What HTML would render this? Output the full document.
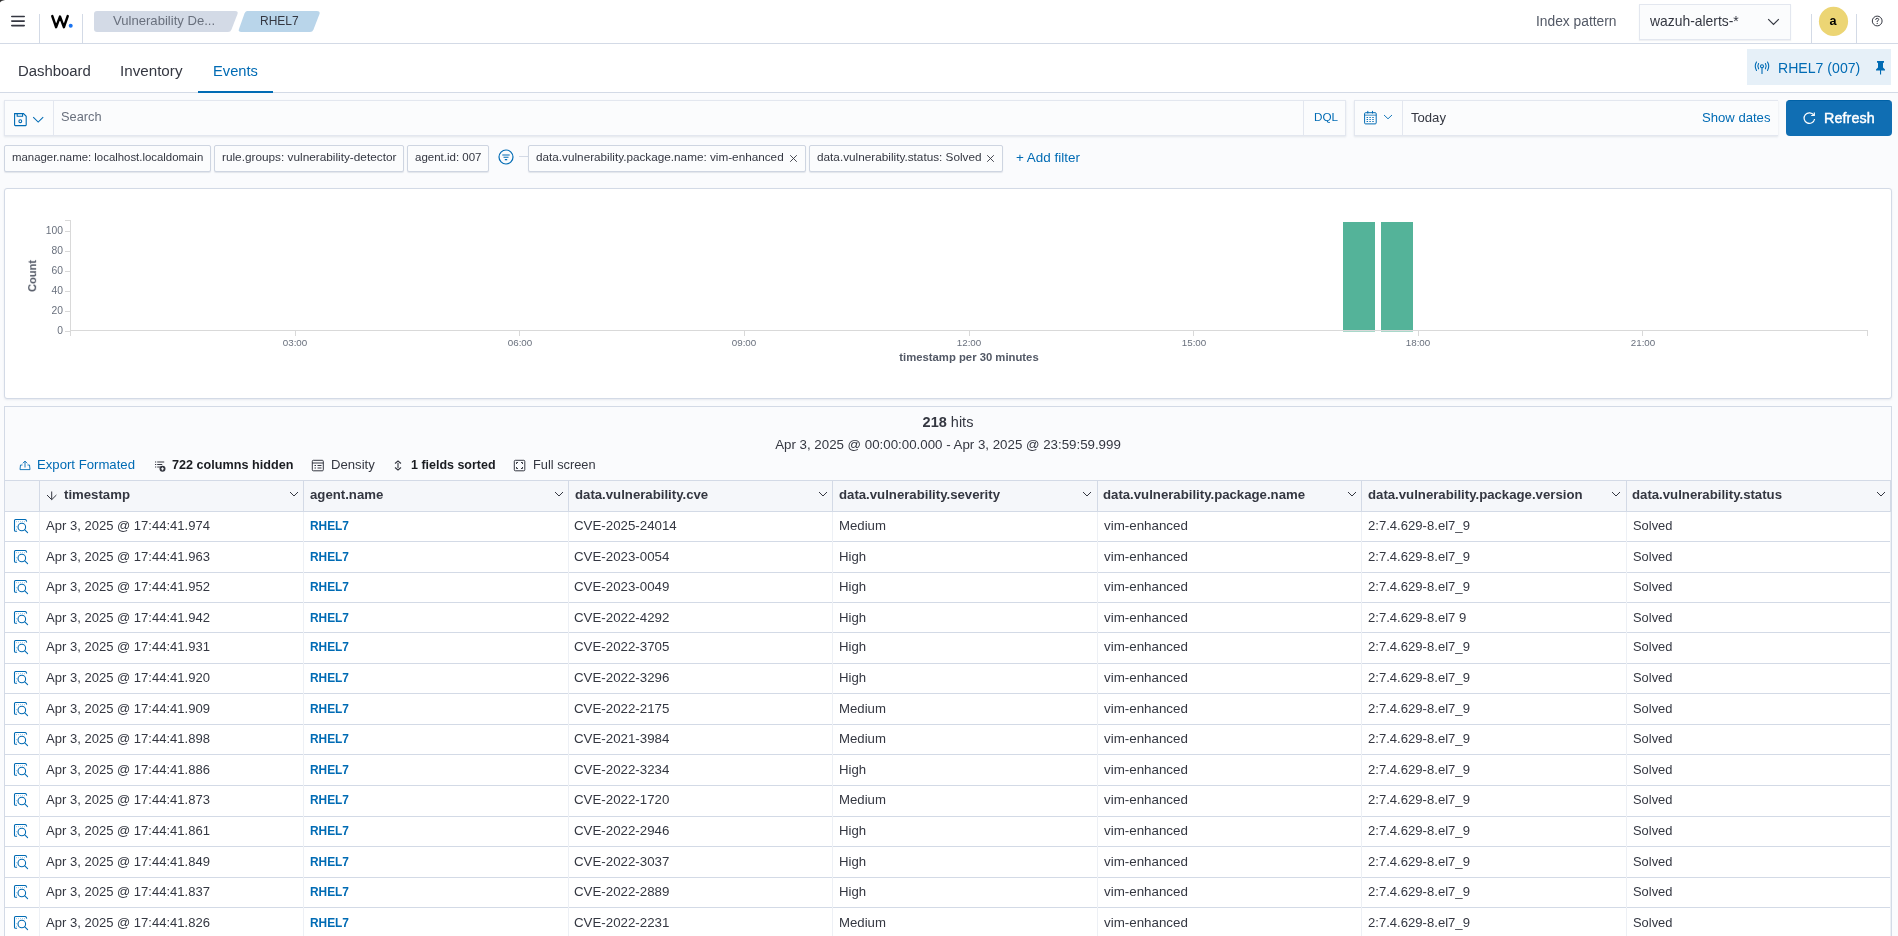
<!DOCTYPE html><html><head><meta charset="utf-8"><style>
html,body{margin:0;padding:0;width:1898px;height:936px;overflow:hidden;background:#FAFBFD;font-family:"Liberation Sans",sans-serif;}
.t{position:absolute;white-space:nowrap;line-height:1;will-change:transform;}
.b{position:absolute;box-sizing:border-box;}
</style></head><body>
<div class="b" style="left:0.00px;top:0.00px;width:1898.00px;height:44.00px;background:#fff;border-bottom:1px solid #D3DAE6"></div>
<div class="b" style="left:0.00px;top:0.00px;width:1.00px;height:1.00px;background:#2b2b2b"></div>
<div class="b" style="left:1.00px;top:0.00px;width:1.00px;height:1.00px;background:#3a3a3a"></div>
<div class="b" style="left:2.00px;top:0.00px;width:1.00px;height:1.00px;background:#6a6a6a"></div>
<div class="b" style="left:3.00px;top:0.00px;width:1.00px;height:1.00px;background:#a8a8a8"></div>
<div class="b" style="left:4.00px;top:0.00px;width:1.00px;height:1.00px;background:#e0e0e0"></div>
<div class="b" style="left:0.00px;top:1.00px;width:1.00px;height:1.00px;background:#555"></div>
<div class="b" style="left:1.00px;top:1.00px;width:1.00px;height:1.00px;background:#d8d8d8"></div>
<div class="b" style="left:0.00px;top:2.00px;width:1.00px;height:1.00px;background:#e8e8e8"></div>
<svg class="b" style="left:10.00px;top:14.00px" width="16" height="14" viewBox="0 0 16 14"><rect x="1" y="1.7" width="14" height="1.6" rx="0.8" fill="#343741"/><rect x="1" y="6.3" width="14" height="1.6" rx="0.8" fill="#343741"/><rect x="1" y="10.8" width="14" height="1.6" rx="0.8" fill="#343741"/></svg>
<div class="b" style="left:39.00px;top:14.00px;width:1.00px;height:29.00px;background:#D3DAE6"></div>
<svg class="b" style="left:50.00px;top:14.00px" width="26" height="15" viewBox="0 0 26 15"><path d="M2.3 2.1 L6.1 13.1 L10 2.6 L13.9 13.1 L17.7 2.1" fill="none" stroke="#000" stroke-width="2.5" stroke-linejoin="round" stroke-linecap="round"/><circle cx="20.7" cy="11.7" r="2" fill="#1A73F0"/></svg>
<div class="b" style="left:82.00px;top:14.00px;width:1.00px;height:29.00px;background:#D3DAE6"></div>
<svg class="b" style="left:94.00px;top:11.00px" width="150" height="21" viewBox="0 0 150 21"><path d="M3 0 H141 Q144.5 0 143.5 3 L137.5 18.5 Q136.5 21 134 21 H3 Q0 21 0 18 V3 Q0 0 3 0 Z" fill="#D3DAE6"/></svg>
<div class="t" style="left:112.80px;top:14.00px;font-size:13.1px;font-weight:400;color:#69707D;">Vulnerability De...</div>
<svg class="b" style="left:238.00px;top:11.00px" width="84" height="21" viewBox="0 0 84 21"><path d="M9 0 H79 Q82.5 0 81.5 3 L75.5 18.5 Q74.5 21 72 21 H3 Q0 21 1 18 L6.5 2.5 Q7.5 0 9 0 Z" fill="#B9D5EA"/></svg>
<div class="t" style="left:260.00px;top:15.00px;font-size:12.0px;font-weight:400;color:#343741;transform:scaleY(1.08);transform-origin:0 100%">RHEL7</div>
<div class="t" style="left:1535.50px;top:15.00px;font-size:13.8px;font-weight:400;color:#535966;">Index pattern</div>
<div class="b" style="left:1638.50px;top:4.00px;width:152.00px;height:35.70px;background:#FBFCFD;border:1px solid #E3E7EF;box-shadow:0 1px 1px rgba(152,162,179,.15)"></div>
<div class="t" style="left:1649.50px;top:15.00px;font-size:13.9px;font-weight:400;color:#343741;">wazuh-alerts-*</div>
<svg class="b" style="left:1767.00px;top:17.50px" width="13" height="8" viewBox="0 0 13 8"><path d="M1.2 1.2 L6.5 6.5 L11.8 1.2" fill="none" stroke="#343741" stroke-width="1.2"/></svg>
<div class="b" style="left:1811.00px;top:14.00px;width:1.00px;height:29.00px;background:#D3DAE6"></div>
<svg class="b" style="left:1818.00px;top:6.00px" width="31" height="31" viewBox="0 0 31 31"><circle cx="15.5" cy="15.4" r="14.6" fill="#ECD574"/></svg>
<div class="t" style="left:1333.30px;width:1000px;text-align:center;top:15.00px;font-size:12.6px;font-weight:700;color:#000;">a</div>
<div class="b" style="left:1856.00px;top:14.00px;width:1.00px;height:29.00px;background:#D3DAE6"></div>
<svg class="b" style="left:1870.00px;top:14.00px" width="14" height="14" viewBox="0 0 14 14"><circle cx="7.2" cy="7" r="4.9" fill="none" stroke="#343741" stroke-width="1"/><path d="M5.7 5.9 Q5.7 4.3 7.2 4.3 Q8.7 4.3 8.7 5.6 Q8.7 6.5 7.2 7.1 V8" fill="none" stroke="#343741" stroke-width="1"/><circle cx="7.2" cy="9.4" r="0.6" fill="#343741"/></svg>
<div class="b" style="left:0.00px;top:44.00px;width:1898.00px;height:49.00px;background:#fff;border-bottom:1px solid #D3DAE6"></div>
<div class="t" style="left:17.60px;top:64.00px;font-size:14.9px;font-weight:400;color:#343741;">Dashboard</div>
<div class="t" style="left:120.40px;top:63.00px;font-size:15.2px;font-weight:400;color:#343741;">Inventory</div>
<div class="t" style="left:213.10px;top:64.00px;font-size:14.7px;font-weight:400;color:#006BB4;">Events</div>
<div class="b" style="left:198.00px;top:91.00px;width:75.00px;height:2.00px;background:#006BB4"></div>
<div class="b" style="left:1747.00px;top:49.00px;width:144.00px;height:36.00px;background:#E6F0F8"></div>
<svg class="b" style="left:1753.00px;top:60.00px" width="18" height="15" viewBox="0 0 18 15"><g fill="none" stroke="#006BB4" stroke-width="1.1" stroke-linecap="round"><path d="M3.5 2 Q1 6 3.5 10.5"/><path d="M5.6 3.5 Q4 6 5.6 8.8"/><path d="M14.5 2 Q17 6 14.5 10.5"/><path d="M12.4 3.5 Q14 6 12.4 8.8"/><circle cx="9" cy="6.2" r="1.5"/><path d="M9 7.8 V13.5"/></g></svg>
<div class="t" style="left:1777.50px;top:61.00px;font-size:14.1px;font-weight:400;color:#006BB4;">RHEL7 (007)</div>
<svg class="b" style="left:1874.00px;top:60.00px" width="13" height="16" viewBox="0 0 13 16"><path d="M3 1 H10 V2.5 L9 3 V7.5 L11 9.5 V10.5 H2 V9.5 L4 7.5 V3 L3 2.5 Z" fill="#006BB4"/><rect x="6" y="10" width="1.1" height="4.5" fill="#006BB4"/></svg>
<div class="b" style="left:4.00px;top:100.00px;width:1342.00px;height:36.00px;background:#FBFCFD;border:1px solid #E3E7EF;box-shadow:0 1px 2px rgba(152,162,179,.25)"></div>
<div class="b" style="left:53.00px;top:101.00px;width:1.00px;height:33.50px;background:#E3E7EF"></div>
<svg class="b" style="left:13.00px;top:112.00px" width="15" height="15" viewBox="0 0 15 15"><g fill="none" stroke="#006BB4" stroke-width="1.1"><path d="M1.6 1.6 H10.5 L13.2 4.3 V13 Q13.2 13.6 12.6 13.6 H2.2 Q1.6 13.6 1.6 13 Z"/><path d="M4.2 1.6 V4.3 H9.6 V1.6"/><circle cx="7.3" cy="9.2" r="1.4"/></g></svg>
<svg class="b" style="left:32.00px;top:115.60px" width="13" height="8" viewBox="0 0 13 8"><path d="M1.2 1.2 L6.2 6.1 L11.2 1.2" fill="none" stroke="#006BB4" stroke-width="1.05"/></svg>
<div class="t" style="left:60.50px;top:111.00px;font-size:12.8px;font-weight:400;color:#69707D;">Search</div>
<div class="b" style="left:1303.00px;top:101.00px;width:1.00px;height:33.50px;background:#E3E7EF"></div>
<div class="t" style="left:1313.70px;top:111.00px;font-size:11.7px;font-weight:400;color:#006BB4;">DQL</div>
<div class="b" style="left:1354.00px;top:100.00px;width:424.00px;height:36.00px;background:#FBFCFD;border:1px solid #E3E7EF;border-right:none;box-shadow:0 1px 2px rgba(152,162,179,.25)"></div>
<div class="b" style="left:1402.00px;top:101.00px;width:1.00px;height:33.50px;background:#E3E7EF"></div>
<svg class="b" style="left:1363.00px;top:110.00px" width="15" height="16" viewBox="0 0 15 16"><g fill="none" stroke="#006BB4" stroke-width="1"><rect x="1.6" y="2.7" width="11.6" height="11.2" rx="1"/><path d="M1.6 5.2 H13.2" stroke-width="1.3" opacity="0.6"/><path d="M4.8 0.9 V3.5 M9.5 0.9 V3.5"/></g><g fill="#006BB4"><rect x="3.5" y="6.9" width="1.6" height="1" rx="0.5"/><rect x="6.3" y="6.9" width="1.6" height="1" rx="0.5"/><rect x="9.2" y="6.9" width="1.6" height="1" rx="0.5"/><rect x="3.5" y="8.9" width="1.6" height="1" rx="0.5"/><rect x="6.3" y="8.9" width="1.6" height="1" rx="0.5"/><rect x="9.2" y="8.9" width="1.6" height="1" rx="0.5"/><rect x="3.5" y="11.0" width="1.6" height="1" rx="0.5"/><rect x="6.3" y="11.0" width="1.6" height="1" rx="0.5"/><rect x="9.2" y="11.0" width="1.6" height="1" rx="0.5"/></g></svg>
<svg class="b" style="left:1383.00px;top:114.00px" width="10" height="7" viewBox="0 0 10 7"><path d="M1 1 L5 4.8 L9 1" fill="none" stroke="#006BB4" stroke-width="0.9"/></svg>
<div class="t" style="left:1411.10px;top:111.00px;font-size:13.1px;font-weight:400;color:#343741;">Today</div>
<div class="t" style="left:1701.60px;top:111.00px;font-size:13.1px;font-weight:400;color:#006BB4;">Show dates</div>
<div class="b" style="left:1786.00px;top:100.00px;width:106.00px;height:36.00px;background:#106EB3;border-radius:4px;border-top:1px solid #0061A6"></div>
<svg class="b" style="left:1802.00px;top:111.00px" width="15" height="14" viewBox="0 0 15 14"><path d="M11.8 4.2 A5.3 5.3 0 1 0 12.6 8" fill="none" stroke="#fff" stroke-width="1.2"/><path d="M9.2 4.5 H12.3 V1.4" fill="none" stroke="#fff" stroke-width="1.2"/></svg>
<div class="t" style="left:1824.20px;top:111.00px;font-size:14.3px;font-weight:400;color:#fff;-webkit-text-stroke:0.45px #fff;letter-spacing:0.1px">Refresh</div>
<div class="b" style="left:4.00px;top:145.00px;width:207.00px;height:27.00px;background:#FBFCFD;border:1px solid #CED5E1;border-radius:2px;box-shadow:0 1px 1px rgba(152,162,179,.25)"></div>
<div class="t" style="left:11.60px;top:152.00px;font-size:11.4px;font-weight:400;color:#343741;">manager.name: localhost.localdomain</div>
<div class="b" style="left:214.00px;top:145.00px;width:190.00px;height:27.00px;background:#FBFCFD;border:1px solid #CED5E1;border-radius:2px;box-shadow:0 1px 1px rgba(152,162,179,.25)"></div>
<div class="t" style="left:221.50px;top:152.00px;font-size:11.8px;font-weight:400;color:#343741;">rule.groups: vulnerability-detector</div>
<div class="b" style="left:407.00px;top:145.00px;width:82.00px;height:27.00px;background:#FBFCFD;border:1px solid #CED5E1;border-radius:2px;box-shadow:0 1px 1px rgba(152,162,179,.25)"></div>
<div class="t" style="left:414.60px;top:152.00px;font-size:11.5px;font-weight:400;color:#343741;">agent.id: 007</div>
<svg class="b" style="left:498.00px;top:149.00px" width="16" height="16" viewBox="0 0 16 16"><circle cx="8" cy="8" r="7" fill="none" stroke="#006BB4" stroke-width="1.2"/><path d="M4.3 6 H11.7 M5.5 8.3 H10.5 M6.8 10.6 H9.2" stroke="#006BB4" stroke-width="1.1"/></svg>
<div class="b" style="left:519.00px;top:156.00px;width:9.00px;height:1.00px;background:#D3DAE6"></div>
<div class="b" style="left:528.00px;top:145.00px;width:278.00px;height:27.00px;background:#FBFCFD;border:1px solid #CED5E1;border-radius:2px;box-shadow:0 1px 1px rgba(152,162,179,.25)"></div>
<div class="t" style="left:535.80px;top:151.00px;font-size:11.74px;font-weight:400;color:#343741;">data.vulnerability.package.name: vim-enhanced</div>
<svg class="b" style="left:789.00px;top:154.00px" width="9" height="9" viewBox="0 0 9 9"><path d="M1.2 1.2 L7.8 7.8 M7.8 1.2 L1.2 7.8" stroke="#343741" stroke-width="0.9"/></svg>
<div class="b" style="left:809.00px;top:145.00px;width:194.00px;height:27.00px;background:#FBFCFD;border:1px solid #CED5E1;border-radius:2px;box-shadow:0 1px 1px rgba(152,162,179,.25)"></div>
<div class="t" style="left:816.60px;top:151.00px;font-size:11.77px;font-weight:400;color:#343741;">data.vulnerability.status: Solved</div>
<svg class="b" style="left:986.00px;top:154.00px" width="9" height="9" viewBox="0 0 9 9"><path d="M1.2 1.2 L7.8 7.8 M7.8 1.2 L1.2 7.8" stroke="#343741" stroke-width="0.9"/></svg>
<div class="t" style="left:1016.20px;top:151.00px;font-size:13.45px;font-weight:400;color:#006BB4;">+ Add filter</div>
<div class="b" style="left:4.00px;top:188.00px;width:1888.00px;height:211.00px;background:#fff;border:1px solid #D3DAE6;border-radius:3px;box-shadow:0 1px 2px rgba(152,162,179,.2)"></div>
<div class="b" style="left:70.10px;top:220.00px;width:1.00px;height:116.00px;background:#D9D9D9"></div>
<div class="b" style="left:65.40px;top:219.90px;width:5.20px;height:1.00px;background:#D9D9D9"></div>
<div class="b" style="left:65.40px;top:230.80px;width:5.20px;height:1.00px;background:#D9D9D9"></div>
<div class="b" style="left:65.40px;top:250.70px;width:5.20px;height:1.00px;background:#D9D9D9"></div>
<div class="b" style="left:65.40px;top:270.70px;width:5.20px;height:1.00px;background:#D9D9D9"></div>
<div class="b" style="left:65.40px;top:290.70px;width:5.20px;height:1.00px;background:#D9D9D9"></div>
<div class="b" style="left:65.40px;top:310.80px;width:5.20px;height:1.00px;background:#D9D9D9"></div>
<div class="b" style="left:65.40px;top:330.80px;width:5.20px;height:1.00px;background:#D9D9D9"></div>
<div class="t" style="left:-937.50px;width:1000px;text-align:right;top:226.00px;font-size:10.3px;font-weight:400;color:#69707D;">100</div>
<div class="t" style="left:-937.50px;width:1000px;text-align:right;top:246.00px;font-size:10.3px;font-weight:400;color:#69707D;">80</div>
<div class="t" style="left:-937.50px;width:1000px;text-align:right;top:266.00px;font-size:10.3px;font-weight:400;color:#69707D;">60</div>
<div class="t" style="left:-937.50px;width:1000px;text-align:right;top:286.00px;font-size:10.3px;font-weight:400;color:#69707D;">40</div>
<div class="t" style="left:-937.50px;width:1000px;text-align:right;top:306.00px;font-size:10.3px;font-weight:400;color:#69707D;">20</div>
<div class="t" style="left:-937.50px;width:1000px;text-align:right;top:326.00px;font-size:10.3px;font-weight:400;color:#69707D;">0</div>
<div class="t" style="left:34.00px;top:269.00px;font-size:11.1px;font-weight:700;color:#535966;transform:translate(-50%,-0%) rotate(-90deg);transform-origin:50% 62%">Count</div>
<div class="b" style="left:1343.30px;top:222.10px;width:32.00px;height:107.90px;background:#54B399"></div>
<div class="b" style="left:1380.90px;top:222.10px;width:32.00px;height:107.90px;background:#54B399"></div>
<div class="b" style="left:1343.30px;top:331.00px;width:32.00px;height:1.00px;background:#A8D8CA"></div>
<div class="b" style="left:1380.90px;top:331.00px;width:32.00px;height:1.00px;background:#A8D8CA"></div>
<div class="b" style="left:70.60px;top:330.00px;width:1797.40px;height:1.00px;background:#D9D9D9"></div>
<div class="b" style="left:294.73px;top:330.00px;width:1.00px;height:6.00px;background:#D9D9D9"></div>
<div class="t" style="left:-204.77px;width:1000px;text-align:center;top:338.00px;font-size:9.8px;font-weight:400;color:#69707D;">03:00</div>
<div class="b" style="left:519.35px;top:330.00px;width:1.00px;height:6.00px;background:#D9D9D9"></div>
<div class="t" style="left:19.85px;width:1000px;text-align:center;top:338.00px;font-size:9.8px;font-weight:400;color:#69707D;">06:00</div>
<div class="b" style="left:743.98px;top:330.00px;width:1.00px;height:6.00px;background:#D9D9D9"></div>
<div class="t" style="left:244.48px;width:1000px;text-align:center;top:338.00px;font-size:9.8px;font-weight:400;color:#69707D;">09:00</div>
<div class="b" style="left:968.60px;top:330.00px;width:1.00px;height:6.00px;background:#D9D9D9"></div>
<div class="t" style="left:469.10px;width:1000px;text-align:center;top:338.00px;font-size:9.8px;font-weight:400;color:#69707D;">12:00</div>
<div class="b" style="left:1193.22px;top:330.00px;width:1.00px;height:6.00px;background:#D9D9D9"></div>
<div class="t" style="left:693.72px;width:1000px;text-align:center;top:338.00px;font-size:9.8px;font-weight:400;color:#69707D;">15:00</div>
<div class="b" style="left:1417.85px;top:330.00px;width:1.00px;height:6.00px;background:#D9D9D9"></div>
<div class="t" style="left:918.35px;width:1000px;text-align:center;top:338.00px;font-size:9.8px;font-weight:400;color:#69707D;">18:00</div>
<div class="b" style="left:1642.47px;top:330.00px;width:1.00px;height:6.00px;background:#D9D9D9"></div>
<div class="t" style="left:1142.97px;width:1000px;text-align:center;top:338.00px;font-size:9.8px;font-weight:400;color:#69707D;">21:00</div>
<div class="b" style="left:1867.00px;top:330.00px;width:1.00px;height:6.00px;background:#D9D9D9"></div>
<div class="t" style="left:469.40px;width:1000px;text-align:center;top:352.00px;font-size:11.3px;font-weight:700;color:#535966;">timestamp per 30 minutes</div>
<div class="b" style="left:4.00px;top:406.00px;width:1888.00px;height:554.00px;background:#FAFBFD;border:1px solid #D3DAE6"></div>
<div class="t" style="left:448.00px;width:1000px;text-align:center;top:415.00px;font-size:14.5px;font-weight:400;color:#343741;"><b>218</b> hits</div>
<div class="t" style="left:448.00px;width:1000px;text-align:center;top:438.00px;font-size:13.3px;font-weight:400;color:#343741;">Apr 3, 2025 @ 00:00:00.000 - Apr 3, 2025 @ 23:59:59.999</div>
<svg class="b" style="left:18.00px;top:459.00px" width="14" height="13" viewBox="0 0 14 13"><g fill="none" stroke="#006BB4" stroke-width="0.9" stroke-linejoin="round"><path d="M4.5 6 H2.5 L2 10.6 H12 L11.5 6 H9.5"/><path d="M7 8.5 V2.2 M4.8 4.3 L7 2.1 L9.2 4.3"/></g></svg>
<div class="t" style="left:37.40px;top:458.00px;font-size:13.16px;font-weight:400;color:#006BB4;">Export Formated</div>
<svg class="b" style="left:154.00px;top:460.00px" width="13" height="13" viewBox="0 0 13 13"><g fill="#343741"><rect x="1" y="1.5" width="1.2" height="1"/><rect x="3.2" y="1.5" width="7" height="1"/><rect x="1" y="4" width="1.2" height="1"/><rect x="3.2" y="4" width="5" height="1"/><rect x="1" y="6.5" width="1.2" height="1"/><rect x="3.2" y="6.5" width="3.5" height="1"/><circle cx="8.5" cy="8.8" r="3"/></g><path d="M8.5 7.3 V10.3 M7 8.8 H10" stroke="#fff" stroke-width="0.9"/></svg>
<div class="t" style="left:172.30px;top:459.00px;font-size:12.63px;font-weight:700;color:#1a1c21;">722 columns hidden</div>
<svg class="b" style="left:311.00px;top:459.00px" width="14" height="13" viewBox="0 0 14 13"><g fill="none" stroke="#343741" stroke-width="1"><rect x="1.3" y="1.3" width="11" height="10.5" rx="1"/><path d="M1.3 4 H12.3 M3.5 6.5 H5 M6.5 6.5 H10.5 M3.5 9 H5 M6.5 9 H10.5"/></g></svg>
<div class="t" style="left:330.70px;top:458.00px;font-size:13.13px;font-weight:400;color:#343741;">Density</div>
<svg class="b" style="left:393.00px;top:460.00px" width="10" height="11" viewBox="0 0 10 11"><g fill="none" stroke="#343741" stroke-width="1.1"><path d="M2 3.5 L5 1 L8 3.5 M2 7.5 L5 10 L8 7.5 M5 3 V8"/></g></svg>
<div class="t" style="left:411.30px;top:459.00px;font-size:12.48px;font-weight:700;color:#1a1c21;">1 fields sorted</div>
<svg class="b" style="left:513.00px;top:459.00px" width="13" height="13" viewBox="0 0 13 13"><g fill="none" stroke="#343741" stroke-width="1"><rect x="1.3" y="1.3" width="10.5" height="10.5" rx="1"/><path d="M3.5 5 V3.5 H5 M8 3.5 H9.5 V5 M9.5 8 V9.5 H8 M5 9.5 H3.5 V8"/></g></svg>
<div class="t" style="left:533.00px;top:459.00px;font-size:12.8px;font-weight:400;color:#343741;">Full screen</div>
<div class="b" style="left:4.00px;top:480.00px;width:1887.00px;height:32.00px;background:#F5F7FA;border-top:1px solid #D3DAE6;border-bottom:1px solid #D3DAE6"></div>
<div class="b" style="left:4.00px;top:512.00px;width:1887.00px;height:30.00px;background:#fff;border-bottom:1px solid #D3DAE6"></div>
<div class="b" style="left:4.00px;top:542.00px;width:1887.00px;height:31.00px;background:#fff;border-bottom:1px solid #D3DAE6"></div>
<div class="b" style="left:4.00px;top:573.00px;width:1887.00px;height:30.00px;background:#fff;border-bottom:1px solid #D3DAE6"></div>
<div class="b" style="left:4.00px;top:603.00px;width:1887.00px;height:30.00px;background:#fff;border-bottom:1px solid #D3DAE6"></div>
<div class="b" style="left:4.00px;top:633.00px;width:1887.00px;height:31.00px;background:#fff;border-bottom:1px solid #D3DAE6"></div>
<div class="b" style="left:4.00px;top:664.00px;width:1887.00px;height:30.00px;background:#fff;border-bottom:1px solid #D3DAE6"></div>
<div class="b" style="left:4.00px;top:694.00px;width:1887.00px;height:31.00px;background:#fff;border-bottom:1px solid #D3DAE6"></div>
<div class="b" style="left:4.00px;top:725.00px;width:1887.00px;height:30.00px;background:#fff;border-bottom:1px solid #D3DAE6"></div>
<div class="b" style="left:4.00px;top:755.00px;width:1887.00px;height:31.00px;background:#fff;border-bottom:1px solid #D3DAE6"></div>
<div class="b" style="left:4.00px;top:786.00px;width:1887.00px;height:31.00px;background:#fff;border-bottom:1px solid #D3DAE6"></div>
<div class="b" style="left:4.00px;top:817.00px;width:1887.00px;height:30.00px;background:#fff;border-bottom:1px solid #D3DAE6"></div>
<div class="b" style="left:4.00px;top:847.00px;width:1887.00px;height:31.00px;background:#fff;border-bottom:1px solid #D3DAE6"></div>
<div class="b" style="left:4.00px;top:878.00px;width:1887.00px;height:30.00px;background:#fff;border-bottom:1px solid #D3DAE6"></div>
<div class="b" style="left:4.00px;top:908.00px;width:1887.00px;height:31.00px;background:#fff;border-bottom:1px solid #D3DAE6"></div>
<div class="b" style="left:4.40px;top:480.00px;width:1.00px;height:456.00px;background:#D3DAE6"></div>
<div class="b" style="left:38.80px;top:480.00px;width:1.00px;height:32.00px;background:#D3DAE6"></div>
<div class="b" style="left:38.80px;top:512.00px;width:1.00px;height:424.00px;background:#EDF0F5"></div>
<div class="b" style="left:303.00px;top:480.00px;width:1.00px;height:32.00px;background:#D3DAE6"></div>
<div class="b" style="left:303.00px;top:512.00px;width:1.00px;height:424.00px;background:#EDF0F5"></div>
<div class="b" style="left:568.00px;top:480.00px;width:1.00px;height:32.00px;background:#D3DAE6"></div>
<div class="b" style="left:568.00px;top:512.00px;width:1.00px;height:424.00px;background:#EDF0F5"></div>
<div class="b" style="left:832.00px;top:480.00px;width:1.00px;height:32.00px;background:#D3DAE6"></div>
<div class="b" style="left:832.00px;top:512.00px;width:1.00px;height:424.00px;background:#EDF0F5"></div>
<div class="b" style="left:1096.50px;top:480.00px;width:1.00px;height:32.00px;background:#D3DAE6"></div>
<div class="b" style="left:1096.50px;top:512.00px;width:1.00px;height:424.00px;background:#EDF0F5"></div>
<div class="b" style="left:1361.00px;top:480.00px;width:1.00px;height:32.00px;background:#D3DAE6"></div>
<div class="b" style="left:1361.00px;top:512.00px;width:1.00px;height:424.00px;background:#EDF0F5"></div>
<div class="b" style="left:1625.50px;top:480.00px;width:1.00px;height:32.00px;background:#D3DAE6"></div>
<div class="b" style="left:1625.50px;top:512.00px;width:1.00px;height:424.00px;background:#EDF0F5"></div>
<div class="b" style="left:1890.00px;top:480.00px;width:1.00px;height:32.00px;background:#D3DAE6"></div>
<div class="b" style="left:1890.00px;top:512.00px;width:1.00px;height:424.00px;background:#EDF0F5"></div>
<div class="t" style="left:63.70px;top:488.00px;font-size:13.2px;font-weight:700;color:#343741;">timestamp</div>
<svg class="b" style="left:288.50px;top:491.00px" width="10" height="7" viewBox="0 0 10 7"><path d="M1 1 L5 5 L9 1" fill="none" stroke="#343741" stroke-width="1"/></svg>
<div class="t" style="left:309.70px;top:488.00px;font-size:13.2px;font-weight:700;color:#343741;">agent.name</div>
<svg class="b" style="left:553.50px;top:491.00px" width="10" height="7" viewBox="0 0 10 7"><path d="M1 1 L5 5 L9 1" fill="none" stroke="#343741" stroke-width="1"/></svg>
<div class="t" style="left:574.70px;top:488.00px;font-size:13.2px;font-weight:700;color:#343741;">data.vulnerability.cve</div>
<svg class="b" style="left:817.50px;top:491.00px" width="10" height="7" viewBox="0 0 10 7"><path d="M1 1 L5 5 L9 1" fill="none" stroke="#343741" stroke-width="1"/></svg>
<div class="t" style="left:838.70px;top:488.00px;font-size:13.2px;font-weight:700;color:#343741;">data.vulnerability.severity</div>
<svg class="b" style="left:1082.00px;top:491.00px" width="10" height="7" viewBox="0 0 10 7"><path d="M1 1 L5 5 L9 1" fill="none" stroke="#343741" stroke-width="1"/></svg>
<div class="t" style="left:1103.20px;top:488.00px;font-size:13.2px;font-weight:700;color:#343741;">data.vulnerability.package.name</div>
<svg class="b" style="left:1346.50px;top:491.00px" width="10" height="7" viewBox="0 0 10 7"><path d="M1 1 L5 5 L9 1" fill="none" stroke="#343741" stroke-width="1"/></svg>
<div class="t" style="left:1367.70px;top:488.00px;font-size:13.2px;font-weight:700;color:#343741;">data.vulnerability.package.version</div>
<svg class="b" style="left:1611.00px;top:491.00px" width="10" height="7" viewBox="0 0 10 7"><path d="M1 1 L5 5 L9 1" fill="none" stroke="#343741" stroke-width="1"/></svg>
<div class="t" style="left:1632.20px;top:488.00px;font-size:13.2px;font-weight:700;color:#343741;">data.vulnerability.status</div>
<svg class="b" style="left:1875.50px;top:491.00px" width="10" height="7" viewBox="0 0 10 7"><path d="M1 1 L5 5 L9 1" fill="none" stroke="#343741" stroke-width="1"/></svg>
<svg class="b" style="left:46.00px;top:489.50px" width="12" height="12" viewBox="0 0 12 12"><g fill="none" stroke="#343741" stroke-width="1"><path d="M5.7 1.5 V9.6 M1 5 L5.7 9.7 L10.4 5"/></g></svg>
<svg class="b" style="left:13.00px;top:517.80px" width="17" height="17" viewBox="0 0 17 17"><g fill="none" stroke="#006BB4" stroke-width="1.1" stroke-linecap="round"><path d="M3.6 13.3 H2.6 Q1.5 13.3 1.5 12.2 V2.6 Q1.5 1.5 2.6 1.5 H12 Q13 1.5 13.4 2.6 L13.6 3.2"/><circle cx="8.8" cy="9" r="3.8"/><path d="M11.8 11.9 L14.6 14.6"/></g><g fill="#006BB4" opacity="0.7"><circle cx="3.6" cy="3.7" r="0.45"/><circle cx="5.6" cy="3.7" r="0.45"/><circle cx="7.6" cy="3.7" r="0.45"/><circle cx="9.6" cy="3.7" r="0.45"/><circle cx="11.6" cy="3.7" r="0.45"/><circle cx="3.6" cy="8.8" r="0.45"/><circle cx="3.6" cy="11.2" r="0.45"/></g></svg>
<div class="t" style="left:46.00px;top:519.00px;font-size:13.04px;font-weight:400;color:#343741;">Apr 3, 2025 @ 17:44:41.974</div>
<div class="t" style="left:310.30px;top:521.00px;font-size:11.9px;font-weight:700;color:#006BB4;">RHEL7</div>
<div class="t" style="left:574.20px;top:519.00px;font-size:13.3px;font-weight:400;color:#343741;">CVE-2025-24014</div>
<div class="t" style="left:838.80px;top:519.00px;font-size:13.2px;font-weight:400;color:#343741;">Medium</div>
<div class="t" style="left:1103.50px;top:519.00px;font-size:13.37px;font-weight:400;color:#343741;">vim-enhanced</div>
<div class="t" style="left:1368.00px;top:519.00px;font-size:13.1px;font-weight:400;color:#343741;">2:7.4.629-8.el7_9</div>
<div class="t" style="left:1632.50px;top:520.00px;font-size:12.9px;font-weight:400;color:#343741;">Solved</div>
<svg class="b" style="left:13.00px;top:548.80px" width="17" height="17" viewBox="0 0 17 17"><g fill="none" stroke="#006BB4" stroke-width="1.1" stroke-linecap="round"><path d="M3.6 13.3 H2.6 Q1.5 13.3 1.5 12.2 V2.6 Q1.5 1.5 2.6 1.5 H12 Q13 1.5 13.4 2.6 L13.6 3.2"/><circle cx="8.8" cy="9" r="3.8"/><path d="M11.8 11.9 L14.6 14.6"/></g><g fill="#006BB4" opacity="0.7"><circle cx="3.6" cy="3.7" r="0.45"/><circle cx="5.6" cy="3.7" r="0.45"/><circle cx="7.6" cy="3.7" r="0.45"/><circle cx="9.6" cy="3.7" r="0.45"/><circle cx="11.6" cy="3.7" r="0.45"/><circle cx="3.6" cy="8.8" r="0.45"/><circle cx="3.6" cy="11.2" r="0.45"/></g></svg>
<div class="t" style="left:46.00px;top:550.00px;font-size:13.04px;font-weight:400;color:#343741;">Apr 3, 2025 @ 17:44:41.963</div>
<div class="t" style="left:310.30px;top:552.00px;font-size:11.9px;font-weight:700;color:#006BB4;">RHEL7</div>
<div class="t" style="left:574.20px;top:550.00px;font-size:13.3px;font-weight:400;color:#343741;">CVE-2023-0054</div>
<div class="t" style="left:838.80px;top:550.00px;font-size:13.2px;font-weight:400;color:#343741;">High</div>
<div class="t" style="left:1103.50px;top:550.00px;font-size:13.37px;font-weight:400;color:#343741;">vim-enhanced</div>
<div class="t" style="left:1368.00px;top:550.00px;font-size:13.1px;font-weight:400;color:#343741;">2:7.4.629-8.el7_9</div>
<div class="t" style="left:1632.50px;top:551.00px;font-size:12.9px;font-weight:400;color:#343741;">Solved</div>
<svg class="b" style="left:13.00px;top:578.80px" width="17" height="17" viewBox="0 0 17 17"><g fill="none" stroke="#006BB4" stroke-width="1.1" stroke-linecap="round"><path d="M3.6 13.3 H2.6 Q1.5 13.3 1.5 12.2 V2.6 Q1.5 1.5 2.6 1.5 H12 Q13 1.5 13.4 2.6 L13.6 3.2"/><circle cx="8.8" cy="9" r="3.8"/><path d="M11.8 11.9 L14.6 14.6"/></g><g fill="#006BB4" opacity="0.7"><circle cx="3.6" cy="3.7" r="0.45"/><circle cx="5.6" cy="3.7" r="0.45"/><circle cx="7.6" cy="3.7" r="0.45"/><circle cx="9.6" cy="3.7" r="0.45"/><circle cx="11.6" cy="3.7" r="0.45"/><circle cx="3.6" cy="8.8" r="0.45"/><circle cx="3.6" cy="11.2" r="0.45"/></g></svg>
<div class="t" style="left:46.00px;top:580.00px;font-size:13.04px;font-weight:400;color:#343741;">Apr 3, 2025 @ 17:44:41.952</div>
<div class="t" style="left:310.30px;top:582.00px;font-size:11.9px;font-weight:700;color:#006BB4;">RHEL7</div>
<div class="t" style="left:574.20px;top:580.00px;font-size:13.3px;font-weight:400;color:#343741;">CVE-2023-0049</div>
<div class="t" style="left:838.80px;top:580.00px;font-size:13.2px;font-weight:400;color:#343741;">High</div>
<div class="t" style="left:1103.50px;top:580.00px;font-size:13.37px;font-weight:400;color:#343741;">vim-enhanced</div>
<div class="t" style="left:1368.00px;top:580.00px;font-size:13.1px;font-weight:400;color:#343741;">2:7.4.629-8.el7_9</div>
<div class="t" style="left:1632.50px;top:581.00px;font-size:12.9px;font-weight:400;color:#343741;">Solved</div>
<svg class="b" style="left:13.00px;top:609.80px" width="17" height="17" viewBox="0 0 17 17"><g fill="none" stroke="#006BB4" stroke-width="1.1" stroke-linecap="round"><path d="M3.6 13.3 H2.6 Q1.5 13.3 1.5 12.2 V2.6 Q1.5 1.5 2.6 1.5 H12 Q13 1.5 13.4 2.6 L13.6 3.2"/><circle cx="8.8" cy="9" r="3.8"/><path d="M11.8 11.9 L14.6 14.6"/></g><g fill="#006BB4" opacity="0.7"><circle cx="3.6" cy="3.7" r="0.45"/><circle cx="5.6" cy="3.7" r="0.45"/><circle cx="7.6" cy="3.7" r="0.45"/><circle cx="9.6" cy="3.7" r="0.45"/><circle cx="11.6" cy="3.7" r="0.45"/><circle cx="3.6" cy="8.8" r="0.45"/><circle cx="3.6" cy="11.2" r="0.45"/></g></svg>
<div class="t" style="left:46.00px;top:611.00px;font-size:13.04px;font-weight:400;color:#343741;">Apr 3, 2025 @ 17:44:41.942</div>
<div class="t" style="left:310.30px;top:613.00px;font-size:11.9px;font-weight:700;color:#006BB4;">RHEL7</div>
<div class="t" style="left:574.20px;top:611.00px;font-size:13.3px;font-weight:400;color:#343741;">CVE-2022-4292</div>
<div class="t" style="left:838.80px;top:611.00px;font-size:13.2px;font-weight:400;color:#343741;">High</div>
<div class="t" style="left:1103.50px;top:611.00px;font-size:13.37px;font-weight:400;color:#343741;">vim-enhanced</div>
<div class="t" style="left:1368.00px;top:611.00px;font-size:13.1px;font-weight:400;color:#343741;">2:7.4.629-8.el7&nbsp;9</div>
<div class="t" style="left:1632.50px;top:612.00px;font-size:12.9px;font-weight:400;color:#343741;">Solved</div>
<svg class="b" style="left:13.00px;top:638.80px" width="17" height="17" viewBox="0 0 17 17"><g fill="none" stroke="#006BB4" stroke-width="1.1" stroke-linecap="round"><path d="M3.6 13.3 H2.6 Q1.5 13.3 1.5 12.2 V2.6 Q1.5 1.5 2.6 1.5 H12 Q13 1.5 13.4 2.6 L13.6 3.2"/><circle cx="8.8" cy="9" r="3.8"/><path d="M11.8 11.9 L14.6 14.6"/></g><g fill="#006BB4" opacity="0.7"><circle cx="3.6" cy="3.7" r="0.45"/><circle cx="5.6" cy="3.7" r="0.45"/><circle cx="7.6" cy="3.7" r="0.45"/><circle cx="9.6" cy="3.7" r="0.45"/><circle cx="11.6" cy="3.7" r="0.45"/><circle cx="3.6" cy="8.8" r="0.45"/><circle cx="3.6" cy="11.2" r="0.45"/></g></svg>
<div class="t" style="left:46.00px;top:640.00px;font-size:13.04px;font-weight:400;color:#343741;">Apr 3, 2025 @ 17:44:41.931</div>
<div class="t" style="left:310.30px;top:642.00px;font-size:11.9px;font-weight:700;color:#006BB4;">RHEL7</div>
<div class="t" style="left:574.20px;top:640.00px;font-size:13.3px;font-weight:400;color:#343741;">CVE-2022-3705</div>
<div class="t" style="left:838.80px;top:640.00px;font-size:13.2px;font-weight:400;color:#343741;">High</div>
<div class="t" style="left:1103.50px;top:640.00px;font-size:13.37px;font-weight:400;color:#343741;">vim-enhanced</div>
<div class="t" style="left:1368.00px;top:640.00px;font-size:13.1px;font-weight:400;color:#343741;">2:7.4.629-8.el7_9</div>
<div class="t" style="left:1632.50px;top:641.00px;font-size:12.9px;font-weight:400;color:#343741;">Solved</div>
<svg class="b" style="left:13.00px;top:669.80px" width="17" height="17" viewBox="0 0 17 17"><g fill="none" stroke="#006BB4" stroke-width="1.1" stroke-linecap="round"><path d="M3.6 13.3 H2.6 Q1.5 13.3 1.5 12.2 V2.6 Q1.5 1.5 2.6 1.5 H12 Q13 1.5 13.4 2.6 L13.6 3.2"/><circle cx="8.8" cy="9" r="3.8"/><path d="M11.8 11.9 L14.6 14.6"/></g><g fill="#006BB4" opacity="0.7"><circle cx="3.6" cy="3.7" r="0.45"/><circle cx="5.6" cy="3.7" r="0.45"/><circle cx="7.6" cy="3.7" r="0.45"/><circle cx="9.6" cy="3.7" r="0.45"/><circle cx="11.6" cy="3.7" r="0.45"/><circle cx="3.6" cy="8.8" r="0.45"/><circle cx="3.6" cy="11.2" r="0.45"/></g></svg>
<div class="t" style="left:46.00px;top:671.00px;font-size:13.04px;font-weight:400;color:#343741;">Apr 3, 2025 @ 17:44:41.920</div>
<div class="t" style="left:310.30px;top:673.00px;font-size:11.9px;font-weight:700;color:#006BB4;">RHEL7</div>
<div class="t" style="left:574.20px;top:671.00px;font-size:13.3px;font-weight:400;color:#343741;">CVE-2022-3296</div>
<div class="t" style="left:838.80px;top:671.00px;font-size:13.2px;font-weight:400;color:#343741;">High</div>
<div class="t" style="left:1103.50px;top:671.00px;font-size:13.37px;font-weight:400;color:#343741;">vim-enhanced</div>
<div class="t" style="left:1368.00px;top:671.00px;font-size:13.1px;font-weight:400;color:#343741;">2:7.4.629-8.el7_9</div>
<div class="t" style="left:1632.50px;top:672.00px;font-size:12.9px;font-weight:400;color:#343741;">Solved</div>
<svg class="b" style="left:13.00px;top:700.80px" width="17" height="17" viewBox="0 0 17 17"><g fill="none" stroke="#006BB4" stroke-width="1.1" stroke-linecap="round"><path d="M3.6 13.3 H2.6 Q1.5 13.3 1.5 12.2 V2.6 Q1.5 1.5 2.6 1.5 H12 Q13 1.5 13.4 2.6 L13.6 3.2"/><circle cx="8.8" cy="9" r="3.8"/><path d="M11.8 11.9 L14.6 14.6"/></g><g fill="#006BB4" opacity="0.7"><circle cx="3.6" cy="3.7" r="0.45"/><circle cx="5.6" cy="3.7" r="0.45"/><circle cx="7.6" cy="3.7" r="0.45"/><circle cx="9.6" cy="3.7" r="0.45"/><circle cx="11.6" cy="3.7" r="0.45"/><circle cx="3.6" cy="8.8" r="0.45"/><circle cx="3.6" cy="11.2" r="0.45"/></g></svg>
<div class="t" style="left:46.00px;top:702.00px;font-size:13.04px;font-weight:400;color:#343741;">Apr 3, 2025 @ 17:44:41.909</div>
<div class="t" style="left:310.30px;top:704.00px;font-size:11.9px;font-weight:700;color:#006BB4;">RHEL7</div>
<div class="t" style="left:574.20px;top:702.00px;font-size:13.3px;font-weight:400;color:#343741;">CVE-2022-2175</div>
<div class="t" style="left:838.80px;top:702.00px;font-size:13.2px;font-weight:400;color:#343741;">Medium</div>
<div class="t" style="left:1103.50px;top:702.00px;font-size:13.37px;font-weight:400;color:#343741;">vim-enhanced</div>
<div class="t" style="left:1368.00px;top:702.00px;font-size:13.1px;font-weight:400;color:#343741;">2:7.4.629-8.el7_9</div>
<div class="t" style="left:1632.50px;top:703.00px;font-size:12.9px;font-weight:400;color:#343741;">Solved</div>
<svg class="b" style="left:13.00px;top:730.80px" width="17" height="17" viewBox="0 0 17 17"><g fill="none" stroke="#006BB4" stroke-width="1.1" stroke-linecap="round"><path d="M3.6 13.3 H2.6 Q1.5 13.3 1.5 12.2 V2.6 Q1.5 1.5 2.6 1.5 H12 Q13 1.5 13.4 2.6 L13.6 3.2"/><circle cx="8.8" cy="9" r="3.8"/><path d="M11.8 11.9 L14.6 14.6"/></g><g fill="#006BB4" opacity="0.7"><circle cx="3.6" cy="3.7" r="0.45"/><circle cx="5.6" cy="3.7" r="0.45"/><circle cx="7.6" cy="3.7" r="0.45"/><circle cx="9.6" cy="3.7" r="0.45"/><circle cx="11.6" cy="3.7" r="0.45"/><circle cx="3.6" cy="8.8" r="0.45"/><circle cx="3.6" cy="11.2" r="0.45"/></g></svg>
<div class="t" style="left:46.00px;top:732.00px;font-size:13.04px;font-weight:400;color:#343741;">Apr 3, 2025 @ 17:44:41.898</div>
<div class="t" style="left:310.30px;top:734.00px;font-size:11.9px;font-weight:700;color:#006BB4;">RHEL7</div>
<div class="t" style="left:574.20px;top:732.00px;font-size:13.3px;font-weight:400;color:#343741;">CVE-2021-3984</div>
<div class="t" style="left:838.80px;top:732.00px;font-size:13.2px;font-weight:400;color:#343741;">Medium</div>
<div class="t" style="left:1103.50px;top:732.00px;font-size:13.37px;font-weight:400;color:#343741;">vim-enhanced</div>
<div class="t" style="left:1368.00px;top:732.00px;font-size:13.1px;font-weight:400;color:#343741;">2:7.4.629-8.el7_9</div>
<div class="t" style="left:1632.50px;top:733.00px;font-size:12.9px;font-weight:400;color:#343741;">Solved</div>
<svg class="b" style="left:13.00px;top:761.80px" width="17" height="17" viewBox="0 0 17 17"><g fill="none" stroke="#006BB4" stroke-width="1.1" stroke-linecap="round"><path d="M3.6 13.3 H2.6 Q1.5 13.3 1.5 12.2 V2.6 Q1.5 1.5 2.6 1.5 H12 Q13 1.5 13.4 2.6 L13.6 3.2"/><circle cx="8.8" cy="9" r="3.8"/><path d="M11.8 11.9 L14.6 14.6"/></g><g fill="#006BB4" opacity="0.7"><circle cx="3.6" cy="3.7" r="0.45"/><circle cx="5.6" cy="3.7" r="0.45"/><circle cx="7.6" cy="3.7" r="0.45"/><circle cx="9.6" cy="3.7" r="0.45"/><circle cx="11.6" cy="3.7" r="0.45"/><circle cx="3.6" cy="8.8" r="0.45"/><circle cx="3.6" cy="11.2" r="0.45"/></g></svg>
<div class="t" style="left:46.00px;top:763.00px;font-size:13.04px;font-weight:400;color:#343741;">Apr 3, 2025 @ 17:44:41.886</div>
<div class="t" style="left:310.30px;top:765.00px;font-size:11.9px;font-weight:700;color:#006BB4;">RHEL7</div>
<div class="t" style="left:574.20px;top:763.00px;font-size:13.3px;font-weight:400;color:#343741;">CVE-2022-3234</div>
<div class="t" style="left:838.80px;top:763.00px;font-size:13.2px;font-weight:400;color:#343741;">High</div>
<div class="t" style="left:1103.50px;top:763.00px;font-size:13.37px;font-weight:400;color:#343741;">vim-enhanced</div>
<div class="t" style="left:1368.00px;top:763.00px;font-size:13.1px;font-weight:400;color:#343741;">2:7.4.629-8.el7_9</div>
<div class="t" style="left:1632.50px;top:764.00px;font-size:12.9px;font-weight:400;color:#343741;">Solved</div>
<svg class="b" style="left:13.00px;top:791.80px" width="17" height="17" viewBox="0 0 17 17"><g fill="none" stroke="#006BB4" stroke-width="1.1" stroke-linecap="round"><path d="M3.6 13.3 H2.6 Q1.5 13.3 1.5 12.2 V2.6 Q1.5 1.5 2.6 1.5 H12 Q13 1.5 13.4 2.6 L13.6 3.2"/><circle cx="8.8" cy="9" r="3.8"/><path d="M11.8 11.9 L14.6 14.6"/></g><g fill="#006BB4" opacity="0.7"><circle cx="3.6" cy="3.7" r="0.45"/><circle cx="5.6" cy="3.7" r="0.45"/><circle cx="7.6" cy="3.7" r="0.45"/><circle cx="9.6" cy="3.7" r="0.45"/><circle cx="11.6" cy="3.7" r="0.45"/><circle cx="3.6" cy="8.8" r="0.45"/><circle cx="3.6" cy="11.2" r="0.45"/></g></svg>
<div class="t" style="left:46.00px;top:793.00px;font-size:13.04px;font-weight:400;color:#343741;">Apr 3, 2025 @ 17:44:41.873</div>
<div class="t" style="left:310.30px;top:795.00px;font-size:11.9px;font-weight:700;color:#006BB4;">RHEL7</div>
<div class="t" style="left:574.20px;top:793.00px;font-size:13.3px;font-weight:400;color:#343741;">CVE-2022-1720</div>
<div class="t" style="left:838.80px;top:793.00px;font-size:13.2px;font-weight:400;color:#343741;">Medium</div>
<div class="t" style="left:1103.50px;top:793.00px;font-size:13.37px;font-weight:400;color:#343741;">vim-enhanced</div>
<div class="t" style="left:1368.00px;top:793.00px;font-size:13.1px;font-weight:400;color:#343741;">2:7.4.629-8.el7_9</div>
<div class="t" style="left:1632.50px;top:794.00px;font-size:12.9px;font-weight:400;color:#343741;">Solved</div>
<svg class="b" style="left:13.00px;top:822.80px" width="17" height="17" viewBox="0 0 17 17"><g fill="none" stroke="#006BB4" stroke-width="1.1" stroke-linecap="round"><path d="M3.6 13.3 H2.6 Q1.5 13.3 1.5 12.2 V2.6 Q1.5 1.5 2.6 1.5 H12 Q13 1.5 13.4 2.6 L13.6 3.2"/><circle cx="8.8" cy="9" r="3.8"/><path d="M11.8 11.9 L14.6 14.6"/></g><g fill="#006BB4" opacity="0.7"><circle cx="3.6" cy="3.7" r="0.45"/><circle cx="5.6" cy="3.7" r="0.45"/><circle cx="7.6" cy="3.7" r="0.45"/><circle cx="9.6" cy="3.7" r="0.45"/><circle cx="11.6" cy="3.7" r="0.45"/><circle cx="3.6" cy="8.8" r="0.45"/><circle cx="3.6" cy="11.2" r="0.45"/></g></svg>
<div class="t" style="left:46.00px;top:824.00px;font-size:13.04px;font-weight:400;color:#343741;">Apr 3, 2025 @ 17:44:41.861</div>
<div class="t" style="left:310.30px;top:826.00px;font-size:11.9px;font-weight:700;color:#006BB4;">RHEL7</div>
<div class="t" style="left:574.20px;top:824.00px;font-size:13.3px;font-weight:400;color:#343741;">CVE-2022-2946</div>
<div class="t" style="left:838.80px;top:824.00px;font-size:13.2px;font-weight:400;color:#343741;">High</div>
<div class="t" style="left:1103.50px;top:824.00px;font-size:13.37px;font-weight:400;color:#343741;">vim-enhanced</div>
<div class="t" style="left:1368.00px;top:824.00px;font-size:13.1px;font-weight:400;color:#343741;">2:7.4.629-8.el7_9</div>
<div class="t" style="left:1632.50px;top:825.00px;font-size:12.9px;font-weight:400;color:#343741;">Solved</div>
<svg class="b" style="left:13.00px;top:853.80px" width="17" height="17" viewBox="0 0 17 17"><g fill="none" stroke="#006BB4" stroke-width="1.1" stroke-linecap="round"><path d="M3.6 13.3 H2.6 Q1.5 13.3 1.5 12.2 V2.6 Q1.5 1.5 2.6 1.5 H12 Q13 1.5 13.4 2.6 L13.6 3.2"/><circle cx="8.8" cy="9" r="3.8"/><path d="M11.8 11.9 L14.6 14.6"/></g><g fill="#006BB4" opacity="0.7"><circle cx="3.6" cy="3.7" r="0.45"/><circle cx="5.6" cy="3.7" r="0.45"/><circle cx="7.6" cy="3.7" r="0.45"/><circle cx="9.6" cy="3.7" r="0.45"/><circle cx="11.6" cy="3.7" r="0.45"/><circle cx="3.6" cy="8.8" r="0.45"/><circle cx="3.6" cy="11.2" r="0.45"/></g></svg>
<div class="t" style="left:46.00px;top:855.00px;font-size:13.04px;font-weight:400;color:#343741;">Apr 3, 2025 @ 17:44:41.849</div>
<div class="t" style="left:310.30px;top:857.00px;font-size:11.9px;font-weight:700;color:#006BB4;">RHEL7</div>
<div class="t" style="left:574.20px;top:855.00px;font-size:13.3px;font-weight:400;color:#343741;">CVE-2022-3037</div>
<div class="t" style="left:838.80px;top:855.00px;font-size:13.2px;font-weight:400;color:#343741;">High</div>
<div class="t" style="left:1103.50px;top:855.00px;font-size:13.37px;font-weight:400;color:#343741;">vim-enhanced</div>
<div class="t" style="left:1368.00px;top:855.00px;font-size:13.1px;font-weight:400;color:#343741;">2:7.4.629-8.el7_9</div>
<div class="t" style="left:1632.50px;top:856.00px;font-size:12.9px;font-weight:400;color:#343741;">Solved</div>
<svg class="b" style="left:13.00px;top:883.80px" width="17" height="17" viewBox="0 0 17 17"><g fill="none" stroke="#006BB4" stroke-width="1.1" stroke-linecap="round"><path d="M3.6 13.3 H2.6 Q1.5 13.3 1.5 12.2 V2.6 Q1.5 1.5 2.6 1.5 H12 Q13 1.5 13.4 2.6 L13.6 3.2"/><circle cx="8.8" cy="9" r="3.8"/><path d="M11.8 11.9 L14.6 14.6"/></g><g fill="#006BB4" opacity="0.7"><circle cx="3.6" cy="3.7" r="0.45"/><circle cx="5.6" cy="3.7" r="0.45"/><circle cx="7.6" cy="3.7" r="0.45"/><circle cx="9.6" cy="3.7" r="0.45"/><circle cx="11.6" cy="3.7" r="0.45"/><circle cx="3.6" cy="8.8" r="0.45"/><circle cx="3.6" cy="11.2" r="0.45"/></g></svg>
<div class="t" style="left:46.00px;top:885.00px;font-size:13.04px;font-weight:400;color:#343741;">Apr 3, 2025 @ 17:44:41.837</div>
<div class="t" style="left:310.30px;top:887.00px;font-size:11.9px;font-weight:700;color:#006BB4;">RHEL7</div>
<div class="t" style="left:574.20px;top:885.00px;font-size:13.3px;font-weight:400;color:#343741;">CVE-2022-2889</div>
<div class="t" style="left:838.80px;top:885.00px;font-size:13.2px;font-weight:400;color:#343741;">High</div>
<div class="t" style="left:1103.50px;top:885.00px;font-size:13.37px;font-weight:400;color:#343741;">vim-enhanced</div>
<div class="t" style="left:1368.00px;top:885.00px;font-size:13.1px;font-weight:400;color:#343741;">2:7.4.629-8.el7_9</div>
<div class="t" style="left:1632.50px;top:886.00px;font-size:12.9px;font-weight:400;color:#343741;">Solved</div>
<svg class="b" style="left:13.00px;top:914.80px" width="17" height="17" viewBox="0 0 17 17"><g fill="none" stroke="#006BB4" stroke-width="1.1" stroke-linecap="round"><path d="M3.6 13.3 H2.6 Q1.5 13.3 1.5 12.2 V2.6 Q1.5 1.5 2.6 1.5 H12 Q13 1.5 13.4 2.6 L13.6 3.2"/><circle cx="8.8" cy="9" r="3.8"/><path d="M11.8 11.9 L14.6 14.6"/></g><g fill="#006BB4" opacity="0.7"><circle cx="3.6" cy="3.7" r="0.45"/><circle cx="5.6" cy="3.7" r="0.45"/><circle cx="7.6" cy="3.7" r="0.45"/><circle cx="9.6" cy="3.7" r="0.45"/><circle cx="11.6" cy="3.7" r="0.45"/><circle cx="3.6" cy="8.8" r="0.45"/><circle cx="3.6" cy="11.2" r="0.45"/></g></svg>
<div class="t" style="left:46.00px;top:916.00px;font-size:13.04px;font-weight:400;color:#343741;">Apr 3, 2025 @ 17:44:41.826</div>
<div class="t" style="left:310.30px;top:918.00px;font-size:11.9px;font-weight:700;color:#006BB4;">RHEL7</div>
<div class="t" style="left:574.20px;top:916.00px;font-size:13.3px;font-weight:400;color:#343741;">CVE-2022-2231</div>
<div class="t" style="left:838.80px;top:916.00px;font-size:13.2px;font-weight:400;color:#343741;">Medium</div>
<div class="t" style="left:1103.50px;top:916.00px;font-size:13.37px;font-weight:400;color:#343741;">vim-enhanced</div>
<div class="t" style="left:1368.00px;top:916.00px;font-size:13.1px;font-weight:400;color:#343741;">2:7.4.629-8.el7_9</div>
<div class="t" style="left:1632.50px;top:917.00px;font-size:12.9px;font-weight:400;color:#343741;">Solved</div>
</body></html>
